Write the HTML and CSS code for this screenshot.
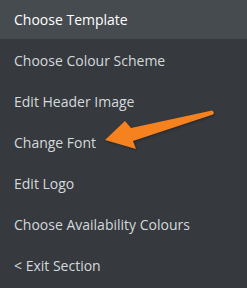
FILE: index.html
```html
<!DOCTYPE html>
<html lang="en">
<head>
  <meta charset="UTF-8">
  <link rel="stylesheet" href="styles.css">
  <title>Section Menu</title>
</head>
<body>
  <ul class="menu">
    <li class="menu-item active">Choose Template</li>
    <li class="menu-item">Choose Colour Scheme</li>
    <li class="menu-item">Edit Header Image</li>
    <li class="menu-item">Change Font</li>
    <li class="menu-item">Edit Logo</li>
    <li class="menu-item">Choose Availability Colours</li>
    <li class="menu-item">&lt; Exit Section</li>
  </ul>
  <!-- pointer arrow drawn over the menu -->
  <svg class="arrow" width="247" height="288" viewBox="0 0 247 288">
    <path d="M105,140 L125,121 L131,128 L212,110.5 Q215,112 213,114.5 L133,141 L136,149 Z" fill="#f5821f"/>
  </svg>
</body>
</html>
```

FILE: styles.css
```css
body, ul, li {
  margin: 0;
  padding: 0;
}

body {
  background-color: #363a3e;
  font-family: "Open Sans", sans-serif;
  width: 247px;
  height: 288px;
  overflow: hidden;
  position: relative;
}

.menu {
  list-style: none;
}

.menu-item {
  height: 41px;
  line-height: 39px;
  padding-left: 14px;
  font-size: 14px;
  color: #d3d9dc;
}

.menu-item.active {
  background-color: #454b4f;
  color: #ffffff;
  height: 39px;
  margin-bottom: 2px;
}

.arrow {
  position: absolute;
  left: 0;
  top: 0;
  filter: drop-shadow(1px 1px 1px rgba(0, 0, 0, 0.35));
}
```
